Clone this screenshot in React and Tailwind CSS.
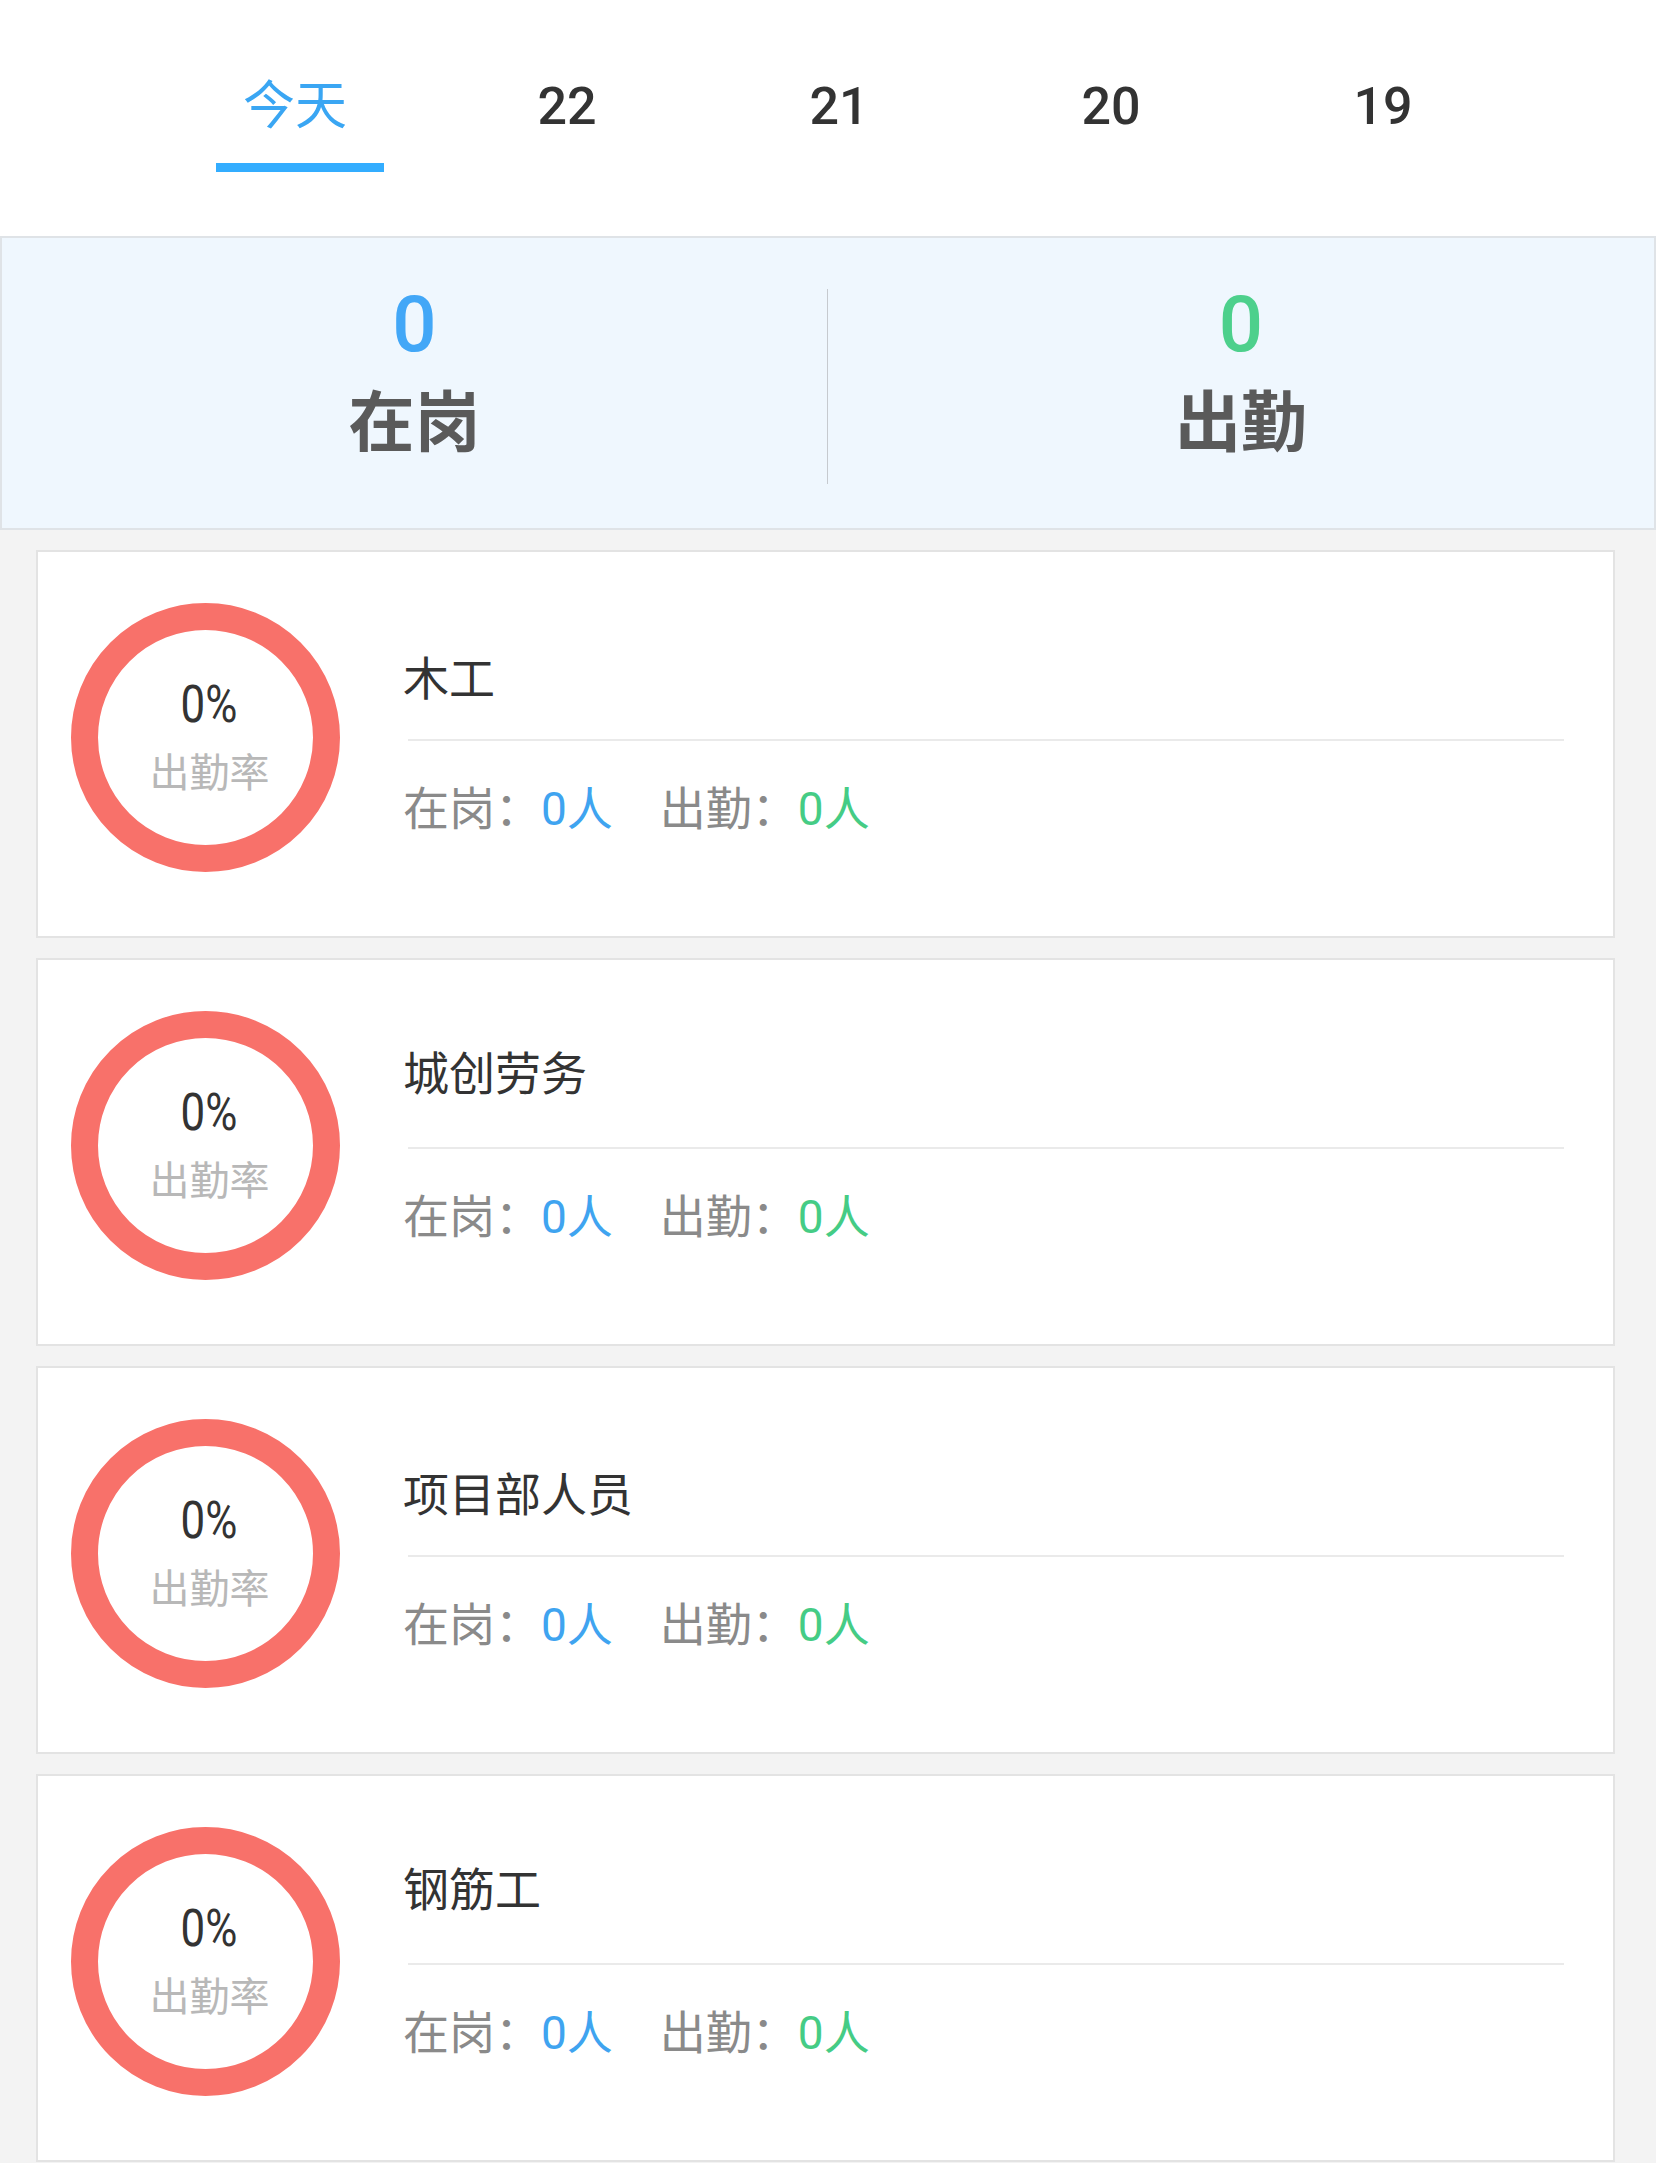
import React from 'react';

const font = "font-['Roboto','Noto_Sans_CJK_SC',sans-serif]";

const tabs = ['今天', '22', '21', '20', '19'];

// some titles sit a little higher in the source app
const groups = [
  { name: '木工', onDuty: 0, attend: 0, rate: 0, raised: false },
  { name: '城创劳务', onDuty: 0, attend: 0, rate: 0, raised: true },
  { name: '项目部人员', onDuty: 0, attend: 0, rate: 0, raised: false },
  { name: '钢筋工', onDuty: 0, attend: 0, rate: 0, raised: true },
];

const DateTabs = ({ active = 0 }) => (
  <div className="h-[236px] bg-white flex pl-[159px]">
    {tabs.map((t, i) => (
      <div key={t} className="w-[272px] flex flex-col items-center pt-[81px]">
        <span
          className={
            i === active
              ? 'text-[52px] leading-[52px] text-[#3aa6f3]'
              : 'text-[52px] leading-[52px] font-medium text-[#333]'
          }
        >
          {t}
        </span>
        {i === active && <div className="mt-[30px] ml-[10px] h-[9px] w-[168px] bg-[#33adff]" />}
      </div>
    ))}
  </div>
);

const Summary = () => (
  <div className="h-[294px] border-2 border-[#dfe3e7] bg-[#eff7fe] flex items-start pt-[51px]">
    <div className="w-1/2 h-[195px] border-r border-[#c6cacf] flex flex-col items-center">
      <span className="text-[78px] leading-[72px] font-medium text-[#42a7f7]">0</span>
      <span className="mt-[30px] text-[66px] leading-[66px] font-bold text-[#5a5a5a]">在岗</span>
    </div>
    <div className="w-1/2 h-[195px] flex flex-col items-center">
      <span className="text-[78px] leading-[72px] font-medium text-[#4dd08c]">0</span>
      <span className="mt-[30px] text-[66px] leading-[66px] font-bold text-[#5a5a5a]">出勤</span>
    </div>
  </div>
);

const GroupCard = ({ name, onDuty, attend, rate, raised }) => (
  <div className="h-[388px] shrink-0 border-2 border-[#e3e3e3] bg-white flex items-start">
    <div className="ml-[33px] mt-[51px] w-[269px] h-[269px] shrink-0 rounded-full border-[27px] border-[#f8716a] flex flex-col items-center justify-center pl-[8px]">
      <span className="text-[51px] leading-[50px] text-[#333] scale-x-[0.86]">{rate}%</span>
      <span className="mt-[22px] text-[40px] leading-[44px] text-[#b8b8b8]">出勤率</span>
    </div>
    <div className={raised ? 'ml-[63px] mr-[49px] mt-[91px] flex-1' : 'ml-[63px] mr-[49px] mt-[104px] flex-1'}>
      <div className="text-[46px] leading-[46px] text-[#333]">{name}</div>
      <div className={raised ? 'mt-[50px] ml-[5px] h-[2px] bg-[#eaeaea]' : 'mt-[37px] ml-[5px] h-[2px] bg-[#eaeaea]'} />
      <div className="mt-[45px] text-[46px] leading-[46px] flex">
        <span className="text-[#8a8a8a]">在岗：</span>
        <span className="text-[#3fa4f0]">{onDuty}人</span>
        <span className="ml-[47px] text-[#8a8a8a]">出勤：</span>
        <span className="text-[#45cc85]">{attend}人</span>
      </div>
    </div>
  </div>
);

export default function App() {
  return (
    <div className={`${font} min-h-screen bg-[#f3f3f3]`}>
      <DateTabs active={0} />
      <Summary />
      <div className="flex flex-col gap-[20px] pt-[20px] pl-[36px] pr-[41px] pb-[20px]">
        {groups.map((g) => (
          <GroupCard key={g.name} {...g} />
        ))}
      </div>
    </div>
  );
}
